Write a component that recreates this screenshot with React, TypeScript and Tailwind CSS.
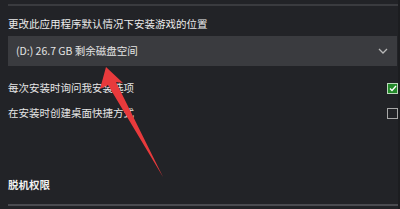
import React from "react";

export default function App() {
  return (
    <div
      className="relative w-[400px] h-[209px] overflow-hidden bg-[#222327] text-[#e6e6e6]"
      style={{ fontFamily: '"Noto Sans CJK SC", "Noto Sans", sans-serif' }}
    >
      <div className="pl-[8px] pt-[4px]">
        <div className="h-[2px] bg-[#3a3b3f]" />
        <div className="mt-[11px] text-[10.5px] leading-[14px] text-[#ececec]">
          更改此应用程序默认情况下安装游戏的位置
        </div>
        <div className="mt-[5px] mr-[3px] h-[30px] bg-[#3a3b3f] flex items-center justify-between pl-[8px] pr-[9px]">
          <span className="text-[10.5px] text-[#e4e4e4]">(D:) 26.7 GB 剩余磁盘空间</span>
          <svg width="10" height="6" viewBox="0 0 10 6">
            <path d="M1 1 L5 5 L9 1" fill="none" stroke="#b8b8b8" strokeWidth="1.3" />
          </svg>
        </div>
        <div className="mt-[15px] flex items-center justify-between pr-[2px] h-[14px]">
          <span className="text-[10.5px] text-[#e6e6e6]">每次安装时询问我安装选项</span>
          <div className="w-[11px] h-[11px] bg-[#23892a] border border-[#b9d8b9] flex items-center justify-center">
            <svg width="8" height="7" viewBox="0 0 8 7">
              <path d="M1 3.5 L3 5.5 L7 1" fill="none" stroke="#ffffff" strokeWidth="1.3" />
            </svg>
          </div>
        </div>
        <div className="mt-[11px] flex items-center justify-between pr-[2px] h-[14px]">
          <span className="text-[10.5px] text-[#e6e6e6]">在安装时创建桌面快捷方式</span>
          <div className="w-[11px] h-[11px] border border-[#a8a8a8]" />
        </div>
        <div className="mt-[58px] text-[10.5px] font-bold text-[#f0f0f0] h-[14px] leading-[14px]">脱机权限</div>
        <div className="mt-[12px] h-[2px] bg-[#4a4b50]" />
      </div>
      <div className="absolute right-0 top-0 w-[2px] h-full bg-[#1c1d20]" />
      <svg className="absolute left-0 top-0" width="400" height="209" viewBox="0 0 400 209">
        <path d="M106 67 L100 89 L108 85 L163 177 L116 82 L123 83 Z" fill="#e83a3c" />
      </svg>
    </div>
  );
}
